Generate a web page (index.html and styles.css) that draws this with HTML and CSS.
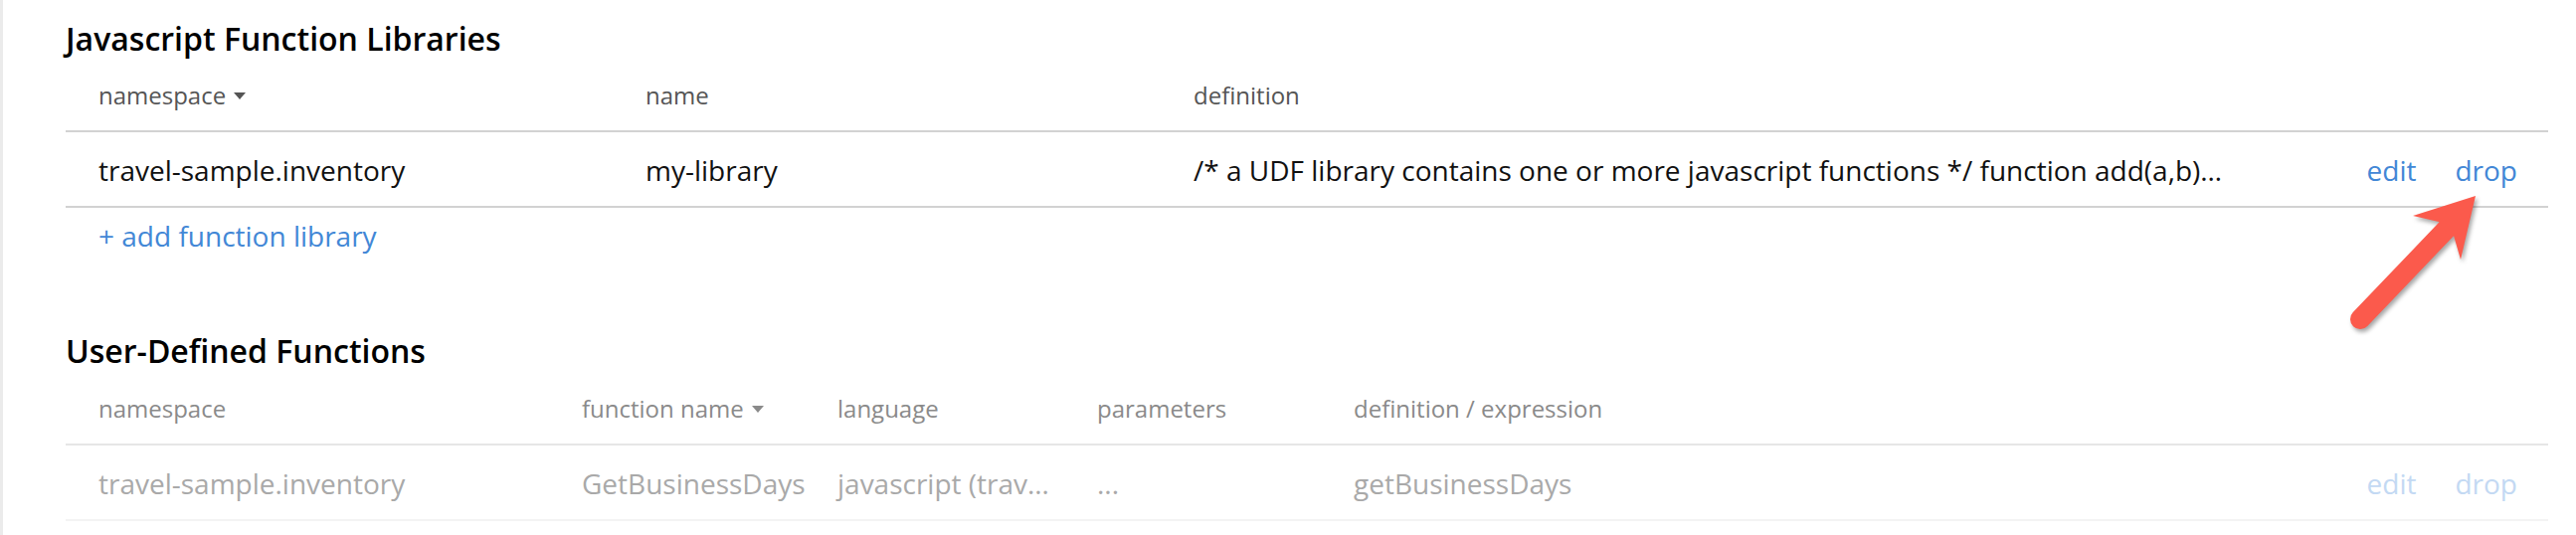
FILE: index.html
```html
<!DOCTYPE html>
<html lang="en">
<head>
<meta charset="utf-8">
<title>Function Libraries</title>
<link rel="stylesheet" href="styles.css">
</head>
<body>
<div class="page">
  <section class="section">
    <h2 class="title">Javascript Function Libraries</h2>
    <div class="row head lib-cols">
      <div class="cell">namespace<span class="caret"></span></div>
      <div class="cell">name</div>
      <div class="cell">definition</div>
      <div class="cell"></div>
    </div>
    <div class="row data lib-cols">
      <div class="cell">travel-sample.inventory</div>
      <div class="cell">my-library</div>
      <div class="cell">/* a UDF library contains one or more javascript functions */ function add(a,b)…</div>
      <div class="cell actions"><a class="link">edit</a><a class="link">drop</a></div>
    </div>
    <div class="add-row"><a class="link">+ add function library</a></div>
  </section>

  <section class="section udf">
    <h2 class="title">User-Defined Functions</h2>
    <div class="row head udf-cols">
      <div class="cell">namespace</div>
      <div class="cell">function name<span class="caret"></span></div>
      <div class="cell">language</div>
      <div class="cell">parameters</div>
      <div class="cell">definition / expression</div>
      <div class="cell"></div>
    </div>
    <div class="row data udf-cols">
      <div class="cell">travel-sample.inventory</div>
      <div class="cell">GetBusinessDays</div>
      <div class="cell">javascript (trav…</div>
      <div class="cell">...</div>
      <div class="cell">getBusinessDays</div>
      <div class="cell actions"><a class="link">edit</a><a class="link">drop</a></div>
    </div>
  </section>
</div>

<svg class="arrow" width="2590" height="538" viewBox="0 0 2590 538" xmlns="http://www.w3.org/2000/svg">
  <g class="arrow-shape">
    <line x1="2373" y1="321" x2="2461" y2="229" stroke="#fb5a4c" stroke-width="20" stroke-linecap="round"/>
    <polygon points="2489,197 2426,217 2452,223 2467,237 2474,261" fill="#fb5a4c"/>
  </g>
</svg>
</body>
</html>
```

FILE: styles.css
```css
html, body {
  margin: 0;
  padding: 0;
  background: #ffffff;
}

body {
  font-family: "Open Sans", "Liberation Sans", sans-serif;
  color: #111111;
  width: 2590px;
  height: 538px;
  overflow: hidden;
  position: relative;
}

.page {
  border-left: 3px solid #ebebeb;
  min-height: 538px;
  box-sizing: border-box;
  padding: 20px 28px 0 63px;
}

.section.udf {
  margin-top: 69px;
}

.title {
  margin: 0;
  font-size: 32px;
  font-weight: 600;
  line-height: 38px;
  color: #000000;
}

.row {
  display: grid;
  box-sizing: border-box;
  align-items: center;
  padding-top: 2px;
}

.lib-cols {
  grid-template-columns: 550px 551px 1fr auto;
}

.udf-cols {
  grid-template-columns: 486px 257px 261px 258px 1fr auto;
}

.cell {
  padding-left: 33px;
  white-space: nowrap;
  overflow: hidden;
  display: flex;
  align-items: center;
}

.head {
  height: 75px;
  font-size: 24px;
  color: #555555;
  border-bottom: 2px solid #d2d2d2;
}

.data {
  height: 76px;
  font-size: 28px;
  color: #111111;
  border-bottom: 2px solid #d2d2d2;
}

.udf .head {
  height: 76px;
  color: #8a8a8a;
  border-bottom-color: #e6e6e6;
}

.udf .data {
  color: #a9a9a9;
  border-bottom-color: #f3f3f3;
}

.caret {
  display: inline-block;
  width: 0;
  height: 0;
  margin-left: 8px;
  margin-top: 2px;
  border-left: 6px solid transparent;
  border-right: 6px solid transparent;
  border-top: 7px solid currentColor;
}

.actions {
  gap: 39px;
  padding-left: 60px;
  padding-right: 31px;
}

.link {
  color: #4287d6;
  text-decoration: none;
  cursor: pointer;
}

.udf .link {
  color: #c3d9f3;
}

.add-row {
  height: 56px;
  display: flex;
  align-items: center;
  padding-left: 33px;
  font-size: 28px;
}

.arrow {
  position: absolute;
  left: 0;
  top: 0;
  pointer-events: none;
}

.arrow-shape {
  filter: drop-shadow(2px 3px 2px rgba(0, 0, 0, 0.35));
}
```
